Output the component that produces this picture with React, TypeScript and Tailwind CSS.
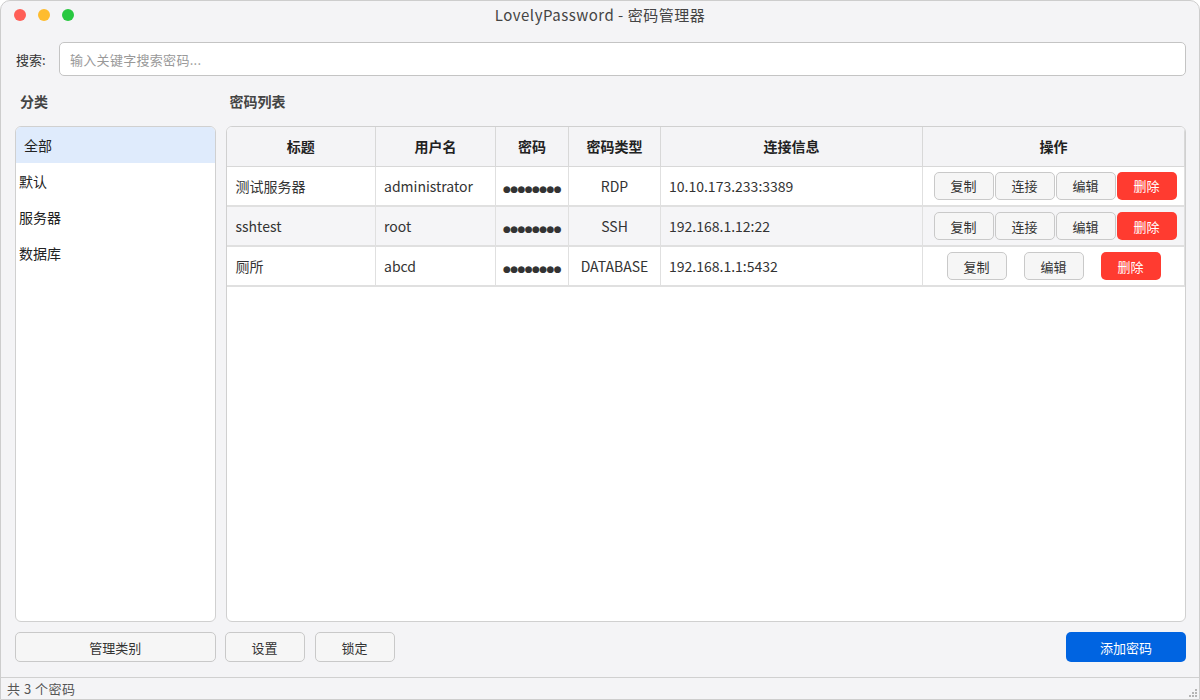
import React from "react";

const font = { fontFamily: '"Noto Sans CJK SC", "Noto Sans", sans-serif' };

type Row = { title: string; user: string; type: string; conn: string; connect: boolean; alt: boolean };

const rows: Row[] = [
  { title: "测试服务器", user: "administrator", type: "RDP", conn: "10.10.173.233:3389", connect: true, alt: false },
  { title: "sshtest", user: "root", type: "SSH", conn: "192.168.1.12:22", connect: true, alt: true },
  { title: "厕所", user: "abcd", type: "DATABASE", conn: "192.168.1.1:5432", connect: false, alt: false },
];

function Btn({ label, danger }: { label: string; danger?: boolean }) {
  return danger ? (
    <button className="w-[60px] h-[28px] rounded-[5px] bg-[#ff3b30] text-white text-[13px] flex items-center justify-center">
      {label}
    </button>
  ) : (
    <button className="w-[60px] h-[28px] rounded-[5px] border border-[#c9c9c9] bg-[#f6f6f6] text-[#333] text-[13px] flex items-center justify-center">
      {label}
    </button>
  );
}

export default function App() {
  return (
    <div
      style={font}
      className="w-[1200px] h-[700px] bg-[#f4f4f6] border border-[#cdcdcd] rounded-t-[10px] flex flex-col text-[#333] overflow-hidden"
    >
      {/* title bar */}
      <div className="relative h-[29px] flex items-center">
        <div className="absolute left-[13px] top-[8px] flex gap-[12px]">
          <span className="w-[12px] h-[12px] rounded-full bg-[#ff5f57]" />
          <span className="w-[12px] h-[12px] rounded-full bg-[#febc2e]" />
          <span className="w-[12px] h-[12px] rounded-full bg-[#28c840]" />
        </div>
        <div className="w-full text-center text-[15px] tracking-[0.5px] text-[#444]">LovelyPassword - 密码管理器</div>
      </div>

      <div className="flex-1 flex flex-col pl-[14px] pr-[13px]">
        {/* search */}
        <div className="mt-[13px] flex items-center h-[34px]">
          <span className="text-[13px] text-[#333] pl-px w-[44px]">搜索:</span>
          <div className="flex-1 h-[34px] bg-white border border-[#c4c4c4] rounded-[5px] flex items-center pl-[10px] text-[13px] text-[#999] tracking-[0.3px]">
            输入关键字搜索密码...
          </div>
        </div>

        {/* columns */}
        <div className="flex-1 flex gap-[10px] mt-[12px]">
          <div className="w-[201px] flex flex-col">
            <div className="h-[26px] pl-[5px] font-bold text-[14px] text-[#444] flex items-center">分类</div>
            <div className="mt-[12px] h-[496px] bg-white border border-[#d0d0d0] rounded-[6px] flex flex-col text-[14px] text-[#222]">
              <div className="h-[36px] bg-[#dfebfc] rounded-t-[5px] flex items-center pl-[8px]">全部</div>
              <div className="h-[36px] flex items-center pl-[3px]">默认</div>
              <div className="h-[36px] flex items-center pl-[3px]">服务器</div>
              <div className="h-[36px] flex items-center pl-[3px]">数据库</div>
            </div>
            <button className="mt-[10px] h-[30px] rounded-[5px] border border-[#c9c9c9] bg-[#f6f6f6] text-[13px]">管理类别</button>
          </div>

          <div className="flex-1 flex flex-col">
            <div className="h-[26px] pl-[4px] font-bold text-[14px] text-[#444] flex items-center">密码列表</div>
            <div className="mt-[12px] h-[496px] bg-white border border-[#d0d0d0] rounded-[6px] overflow-hidden">
              <table className="border-collapse text-[14px] table-fixed w-[958px]">
                <colgroup>
                  <col className="w-[149px]" />
                  <col className="w-[120px]" />
                  <col className="w-[73px]" />
                  <col className="w-[92px]" />
                  <col className="w-[262px]" />
                  <col className="w-[262px]" />
                </colgroup>
                <thead>
                  <tr className="h-[39px] bg-[#f4f4f6] font-bold text-[#222]">
                    <th className="border-b border-r border-[#d8d8d8] font-bold">标题</th>
                    <th className="border-b border-r border-[#d8d8d8] font-bold">用户名</th>
                    <th className="border-b border-r border-[#d8d8d8] font-bold">密码</th>
                    <th className="border-b border-r border-[#d8d8d8] font-bold">密码类型</th>
                    <th className="border-b border-r border-[#d8d8d8] font-bold">连接信息</th>
                    <th className="border-b border-r border-[#d8d8d8] font-bold">操作</th>
                  </tr>
                </thead>
                <tbody>
                  {rows.map((r, i) => (
                    <tr key={i} className={`h-[40px] ${r.alt ? "bg-[#f5f5f7]" : "bg-white"}`}>
                      <td className="border-b-2 border-r border-[#e0e0e0] pl-[9px]">{r.title}</td>
                      <td className="border-b-2 border-r border-[#e0e0e0] pl-[8px]">{r.user}</td>
                      <td className="border-b-2 border-r border-[#e0e0e0] text-center">
                        <span className="text-[9px] tracking-[-0.6px]" style={{ fontFamily: '"DejaVu Sans", sans-serif' }}>●●●●●●●●</span>
                      </td>
                      <td className="border-b-2 border-r border-[#e0e0e0] text-center">{r.type}</td>
                      <td className="border-b-2 border-r border-[#e0e0e0] pl-[8px]">{r.conn}</td>
                      <td className="border-b-2 border-r border-[#e0e0e0]">
                        {r.connect ? (
                          <div className="flex justify-center gap-px pl-[3px]">
                            <Btn label="复制" />
                            <Btn label="连接" />
                            <Btn label="编辑" />
                            <Btn label="删除" danger />
                          </div>
                        ) : (
                          <div className="flex justify-center gap-[17px]">
                            <Btn label="复制" />
                            <Btn label="编辑" />
                            <Btn label="删除" danger />
                          </div>
                        )}
                      </td>
                    </tr>
                  ))}
                </tbody>
              </table>
            </div>
            <div className="mt-[10px] flex items-center gap-[10px]">
              <button className="w-[80px] h-[30px] rounded-[5px] border border-[#c9c9c9] bg-[#f6f6f6] text-[13px] ml-[-1px]">设置</button>
              <button className="w-[80px] h-[30px] rounded-[5px] border border-[#c9c9c9] bg-[#f6f6f6] text-[13px]">锁定</button>
              <div className="flex-1" />
              <button className="w-[120px] h-[30px] rounded-[5px] bg-[#0064e1] text-white text-[13px]">添加密码</button>
            </div>
          </div>
        </div>
        <div className="h-[15px]" />
      </div>

      {/* status bar */}
      <div className="relative h-[22px] border-t border-[#d0d0d0] flex items-center pl-[6px] text-[13px] text-[#555] tracking-[0.5px]">
        共 3 个密码
        <svg className="absolute right-[2px] bottom-[2px]" width="10" height="10" viewBox="0 0 10 10">
          <rect x="8" y="2" width="2" height="2" fill="#b5b5b5" />
          <rect x="5" y="5" width="2" height="2" fill="#b5b5b5" />
          <rect x="8" y="5" width="2" height="2" fill="#b5b5b5" />
          <rect x="2" y="8" width="2" height="2" fill="#b5b5b5" />
          <rect x="5" y="8" width="2" height="2" fill="#b5b5b5" />
          <rect x="8" y="8" width="2" height="2" fill="#b5b5b5" />
        </svg>
      </div>
    </div>
  );
}
